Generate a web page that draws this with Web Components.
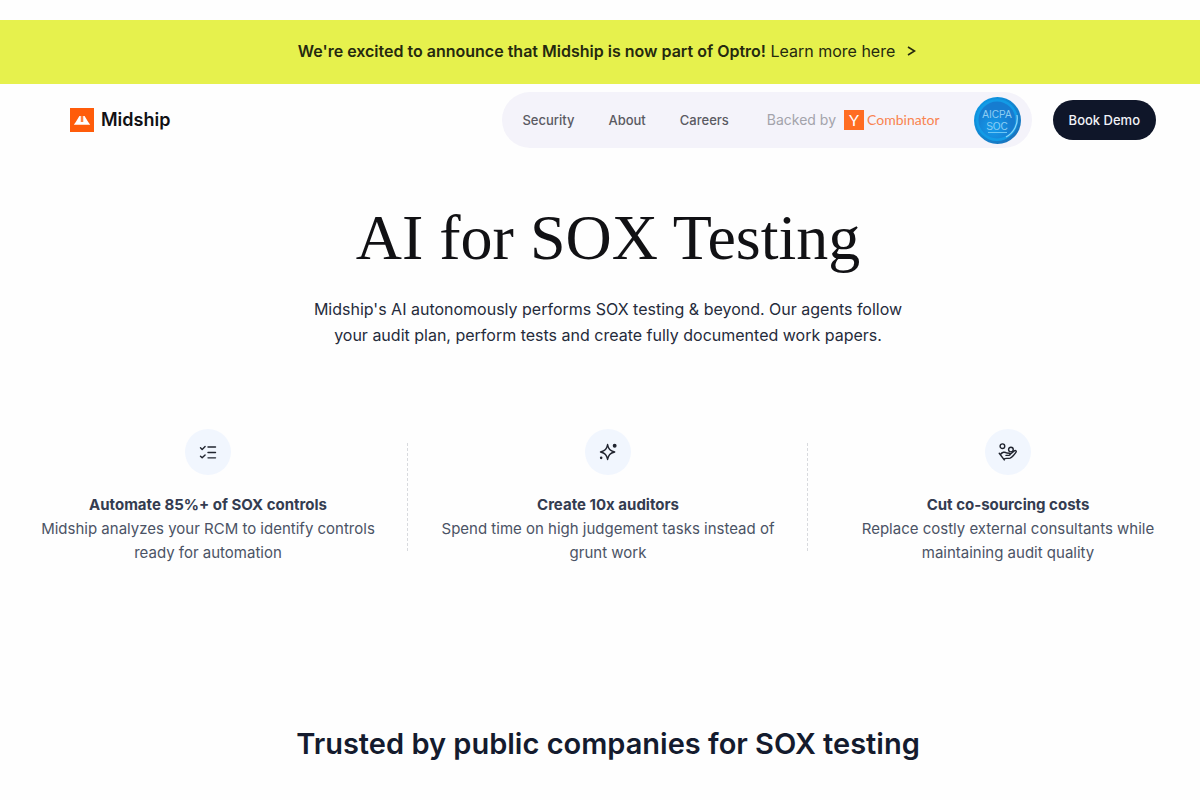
<!DOCTYPE html>
<html lang="en">
<head>
<meta charset="utf-8">
<meta name="viewport" content="width=device-width, initial-scale=1">
<title>Midship</title>
<style>
  body {
    margin: 0;
    padding-top: 20px;
    overflow-x: hidden;
    background: #fefefe;
    color: #0f172a;
    font-family: Inter, "Liberation Sans", sans-serif;
  }
  main {
    margin: 0 -8px 0 8px;
  }
</style>
</head>
<body>
<announcement-bar href="#optro">
  <strong slot="lead">We're excited to announce that Midship is now part of Optro!</strong>
  Learn more here
</announcement-bar>

<site-header>
  <nav-link href="#security">Security</nav-link>
  <nav-link href="#about">About</nav-link>
  <nav-link href="#careers">Careers</nav-link>
  <backed-by></backed-by>
  <soc-badge></soc-badge>
  <pill-button slot="action">Book Demo</pill-button>
</site-header>

<main>
  <page-hero>
    <span slot="title">AI for SOX Testing</span>
    Midship's AI autonomously performs SOX testing &amp; beyond. Our agents follow your audit plan, perform tests and create fully documented work papers.
  </page-hero>

  <feature-row>
    <feature-item icon="checklist" heading="Automate 85%+ of SOX controls">Midship analyzes your RCM to identify controls ready for automation</feature-item>
    <feature-item icon="sparkle" heading="Create 10x auditors">Spend time on high judgement tasks instead of grunt work</feature-item>
    <feature-item icon="savings" heading="Cut co-sourcing costs">Replace costly external consultants while maintaining audit quality</feature-item>
  </feature-row>

  <section-title>Trusted by public companies for SOX testing</section-title>
</main>

<script>
function attach(el, html) {
  const template = document.createElement("template");
  template.innerHTML = html;
  el.attachShadow({ mode: "open" }).appendChild(template.content.cloneNode(true));
}

class AnnouncementBar extends HTMLElement {
  constructor() {
    super();
    attach(this, `
      <style>
        :host {
          display: block;
          background: #e6f14d;
        }
        a {
          display: flex;
          justify-content: center;
          align-items: center;
          gap: 12px;
          padding: 19px 0 21px 14px;
          color: #25290f;
          font-size: 16px;
          line-height: 24px;
          text-decoration: none;
        }
        ::slotted(strong) {
          font-weight: 600;
        }
        svg {
          width: 9px;
          height: 10px;
        }
      </style>
      <a>
        <span><slot name="lead"></slot> <slot></slot></span>
        <svg viewBox="0 0 9 10" fill="none" stroke="currentColor" stroke-width="1.6"><path d="M1 1l6.5 4L1 9"/></svg>
      </a>
    `);
  }

  connectedCallback() {
    this.shadowRoot.querySelector("a").href = this.getAttribute("href");
  }
}

class SiteHeader extends HTMLElement {
  constructor() {
    super();
    attach(this, `
      <style>
        :host {
          display: block;
        }
        header {
          display: flex;
          align-items: center;
          gap: 21px;
          padding: 8px 44px 8px 70px;
        }
        .logo {
          display: flex;
          align-items: center;
          gap: 7px;
          margin-right: auto;
          color: #111114;
          font-size: 18px;
          font-weight: 600;
          line-height: 24px;
          text-decoration: none;
        }
        .logo svg {
          width: 24px;
          height: 24px;
        }
        nav {
          display: flex;
          align-items: center;
          gap: 34px;
          height: 56px;
          padding: 0 11px 0 20px;
          border-radius: 28px;
          background: #f4f3fa;
        }
      </style>
      <header>
        <a class="logo" href="#home">
          <svg viewBox="0 0 24 24">
            <rect width="24" height="24" fill="#ff5c0a"/>
            <path fill="#fff" d="M10.800 8v6H5.800L9.400 8zM13.200 8v6h5L14.600 8zM3.800 16.800l2-2.800h12.400l2 2.800z"/>
            <path fill="#ffb48a" d="M11.600 8h.8v6h-.8z"/>
          </svg>
          <span>Midship</span>
        </a>
        <nav><slot></slot></nav>
        <slot name="action"></slot>
      </header>
    `);
  }
}

class NavLink extends HTMLElement {
  constructor() {
    super();
    attach(this, `
      <style>
        :host {
          display: block;
        }
        a {
          display: block;
          color: #5a5a62;
          font-size: 13px;
          font-weight: 500;
          line-height: 20px;
          text-decoration: none;
        }
      </style>
      <a><slot></slot></a>
    `);
  }

  connectedCallback() {
    this.shadowRoot.querySelector("a").href = this.getAttribute("href");
  }
}

class BackedBy extends HTMLElement {
  constructor() {
    super();
    attach(this, `
      <style>
        :host {
          display: flex;
          align-items: center;
          gap: 8px;
          padding-left: 4px;
          color: #a3a3ab;
          font-size: 14px;
          line-height: 20px;
        }
        .yc {
          display: flex;
          align-items: center;
          gap: 3px;
          color: #f98350;
          font-family: Lato, "Open Sans", sans-serif;
        }
        .mark {
          width: 20px;
          background: #ff6d22;
          color: #fff;
          font-size: 16px;
          text-align: center;
        }
      </style>
      <span>Backed by</span>
      <span class="yc"><span class="mark">Y</span><span>Combinator</span></span>
    `);
  }
}

class SocBadge extends HTMLElement {
  constructor() {
    super();
    attach(this, `
      <style>
        :host {
          display: block;
          width: 47px;
          height: 47px;
        }
        svg {
          display: block;
          width: 100%;
          height: 100%;
        }
        text {
          fill: #8ccdf3;
          font-family: "Liberation Sans", sans-serif;
          font-size: 10px;
          text-anchor: middle;
        }
      </style>
      <svg viewBox="0 0 47 47">
        <defs>
          <linearGradient id="rim" x1="0" y1="0" x2="1" y2="1">
            <stop offset="0" stop-color="#0a9be8"/>
            <stop offset="1" stop-color="#1c6fb8"/>
          </linearGradient>
          <radialGradient id="face" cx=".4" cy=".7">
            <stop offset="0" stop-color="#149dec"/>
            <stop offset="1" stop-color="#167cd0"/>
          </radialGradient>
        </defs>
        <circle cx="23.500" cy="23.500" r="23.500" fill="url(#rim)"/>
        <circle cx="23" cy="23" r="21" fill="#129be6"/>
        <circle cx="23" cy="23" r="18.500" fill="url(#face)"/>
        <path d="M43 18a21 21 0 0 1-11 22" fill="none" stroke="#8fd4f7" stroke-width="1.200"/>
        <text x="23" y="21">AICPA</text>
        <text x="23" y="33">SOC</text>
        <path d="M14 35.500h19" stroke="#6bc6f5"/>
      </svg>
    `);
  }
}

class PillButton extends HTMLElement {
  constructor() {
    super();
    attach(this, `
      <style>
        :host {
          display: block;
        }
        button {
          height: 40px;
          padding: 0 16px;
          border: 0;
          border-radius: 20px;
          background: #0f1629;
          color: #f1f2f7;
          font: 500 13px/20px Inter, "Liberation Sans", sans-serif;
          white-space: nowrap;
          cursor: pointer;
        }
      </style>
      <button type="button"><slot></slot></button>
    `);
  }
}

class PageHero extends HTMLElement {
  constructor() {
    super();
    attach(this, `
      <style>
        :host {
          display: block;
          padding-top: 34px;
          text-align: center;
        }
        h1 {
          margin: 0;
          color: #111114;
          font: 400 64px/96px "Liberation Serif", serif;
        }
        p {
          max-width: 600px;
          margin: 10px auto 0;
          padding-bottom: 8px;
          color: #252b3b;
          font-size: 16px;
          line-height: 26px;
        }
      </style>
      <h1><slot name="title"></slot></h1>
      <p><slot></slot></p>
    `);
  }
}

class FeatureRow extends HTMLElement {
  constructor() {
    super();
    attach(this, `
      <style>
        :host {
          display: grid;
          grid-template-columns: repeat(3, 1fr);
          padding-top: 73px;
        }
      </style>
      <slot></slot>
    `);
  }
}

const icons = {
  checklist: `<path d="M3 7l2 2 3.500-3.500M3 17l2 2 3.500-3.500M12 6h9M12 12.500h9M12 19h9"/>`,
  sparkle: `<path d="M11.500 3c1 5.600 2.900 7.600 8.500 9-5.600 1.400-7.500 3.400-8.500 9-1-5.600-2.900-7.600-8.500-9 5.600-1.400 7.500-3.400 8.500-9z"/><circle cx="20" cy="4.500" r="1.500" fill="currentColor"/><circle cx="3.800" cy="19" r=".7" fill="currentColor"/>`,
  savings: `<circle cx="5.300" cy="5" r="2.800"/><circle cx="15.500" cy="9" r="2.800"/><path d="M3 15c2-3 5-3.500 7.500-1.800l3.500.3c1.500.8.500 2.500-1 2.500H9.500M14 15.300l5.500-4.600c1.600-1.200 3.200.2 2 1.800-2 2.800-4.500 5.800-7 6.800-2.800 1-5.500-.4-7.500 1.200M1.500 13.500l6 8"/>`
};

class FeatureItem extends HTMLElement {
  constructor() {
    super();
    attach(this, `
      <style>
        :host {
          display: block;
          position: relative;
          padding: 0 32px;
          color: #4b5365;
          font-size: 15px;
          line-height: 24px;
          text-align: center;
        }
        /* dashed rule between neighbouring items */
        :host(:not(:last-child))::after {
          content: "";
          position: absolute;
          top: 14px;
          right: 0;
          bottom: 14px;
          border-right: 1px dashed #d8dade;
        }
        .icon {
          display: grid;
          place-items: center;
          width: 46px;
          height: 46px;
          margin: 0 auto 18px;
          border-radius: 50%;
          background: #f1f6fe;
          color: #20242f;
        }
        svg {
          width: 20px;
          height: 20px;
          fill: none;
          stroke: currentColor;
          stroke-width: 1.7;
          stroke-linecap: round;
          stroke-linejoin: round;
        }
        h3 {
          margin: 0;
          color: #343c50;
          font-size: 15px;
          font-weight: 700;
          line-height: 24px;
        }
        p {
          margin: 0;
        }
      </style>
      <div class="icon"><svg viewBox="0 0 24 24"></svg></div>
      <h3></h3>
      <p><slot></slot></p>
    `);
  }

  connectedCallback() {
    this.shadowRoot.querySelector("svg").innerHTML = icons[this.getAttribute("icon")];
    this.shadowRoot.querySelector("h3").textContent = this.getAttribute("heading");
  }
}

class SectionTitle extends HTMLElement {
  constructor() {
    super();
    attach(this, `
      <style>
        :host {
          display: block;
          padding: 159px 0 32px;
          text-align: center;
        }
        h2 {
          margin: 0;
          color: #141b2e;
          font-size: 29px;
          font-weight: 600;
          line-height: 40px;
        }
      </style>
      <h2><slot></slot></h2>
    `);
  }
}

customElements.define("announcement-bar", AnnouncementBar);
customElements.define("site-header", SiteHeader);
customElements.define("nav-link", NavLink);
customElements.define("backed-by", BackedBy);
customElements.define("soc-badge", SocBadge);
customElements.define("pill-button", PillButton);
customElements.define("page-hero", PageHero);
customElements.define("feature-row", FeatureRow);
customElements.define("feature-item", FeatureItem);
customElements.define("section-title", SectionTitle);
</script>
</body>
</html>
